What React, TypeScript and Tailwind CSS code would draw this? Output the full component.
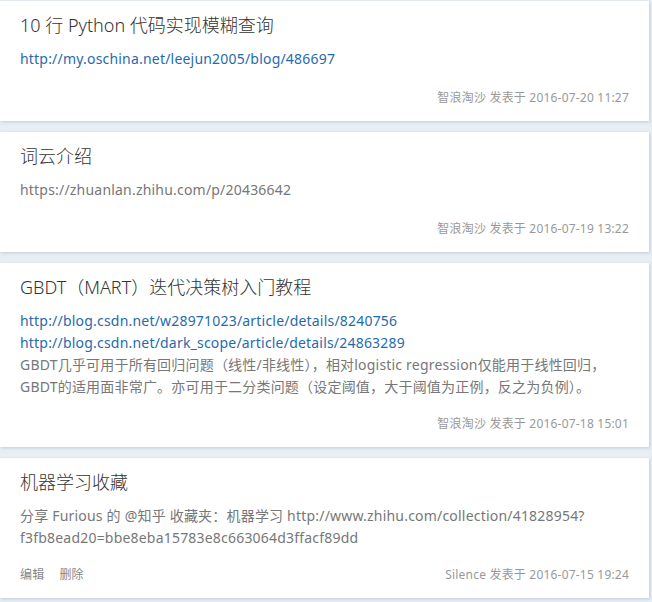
import React from "react";

// one post in the list
type Post = {
  title: string;
  body: React.ReactNode;
  author: string;
  time: string;
  footerGap: string;
  actions?: boolean;
};

const linkCls = "block text-[#1f6bae]";

const posts: Post[] = [
  {
    title: "10 行 Python 代码实现模糊查询",
    body: (
      <a href="#" className={linkCls}>
        http://my.oschina.net/leejun2005/blog/486697
      </a>
    ),
    author: "智浪淘沙",
    time: "2016-07-20 11:27",
    footerGap: "mt-[18px]",
  },
  {
    title: "词云介绍",
    body: <p>https://zhuanlan.zhihu.com/p/20436642</p>,
    author: "智浪淘沙",
    time: "2016-07-19 13:22",
    footerGap: "mt-[18px]",
  },
  {
    title: "GBDT（MART）迭代决策树入门教程",
    body: (
      <>
        <a href="#" className={linkCls}>
          http://blog.csdn.net/w28971023/article/details/8240756
        </a>
        <a href="#" className={linkCls}>
          http://blog.csdn.net/dark_scope/article/details/24863289
        </a>
        <p>
          GBDT几乎可用于所有回归问题（线性/非线性），相对logistic regression仅能用于线性回归，
          <br />
          GBDT的适用面非常广。亦可用于二分类问题（设定阈值，大于阈值为正例，反之为负例）。
        </p>
      </>
    ),
    author: "智浪淘沙",
    time: "2016-07-18 15:01",
    footerGap: "mt-4",
  },
  {
    title: "机器学习收藏",
    body: (
      <p>
        分享 Furious 的 @知乎 收藏夹：机器学习 http://www.zhihu.com/collection/41828954?
        <br />
        f3fb8ead20=bbe8eba15783e8c663064d3ffacf89dd
      </p>
    ),
    author: "Silence",
    time: "2016-07-15 19:24",
    footerGap: "mt-4",
    actions: true,
  },
];

export default function App() {
  return (
    <div
      className="min-h-[602px] bg-[#e9eef5] pt-px pr-[3px] flex flex-col gap-[11px]"
      style={{ fontFamily: '"Noto Sans", "Noto Sans CJK SC", sans-serif' }}
    >
      {posts.map((p) => (
        <article
          key={p.time}
          className="bg-white px-5 pt-[11px] pb-[13px] shadow-[1px_1px_3px_rgba(160,175,195,0.55)]"
        >
          <h2 className="text-[18px] leading-[26px] font-light text-[#333]">{p.title}</h2>
          <div className="mt-[10px] text-[14px] leading-[22px] tracking-[0.2px] text-[#777]">
            {p.body}
          </div>
          <div
            className={`${p.footerGap} flex items-center text-[12px] leading-5 tracking-[0.2px] text-[#999]`}
          >
            {p.actions && (
              <div className="flex gap-[15px] text-[#888]">
                <button>编辑</button>
                <button>删除</button>
              </div>
            )}
            <span className="ml-auto">
              {p.author} 发表于 {p.time}
            </span>
          </div>
        </article>
      ))}
    </div>
  );
}
